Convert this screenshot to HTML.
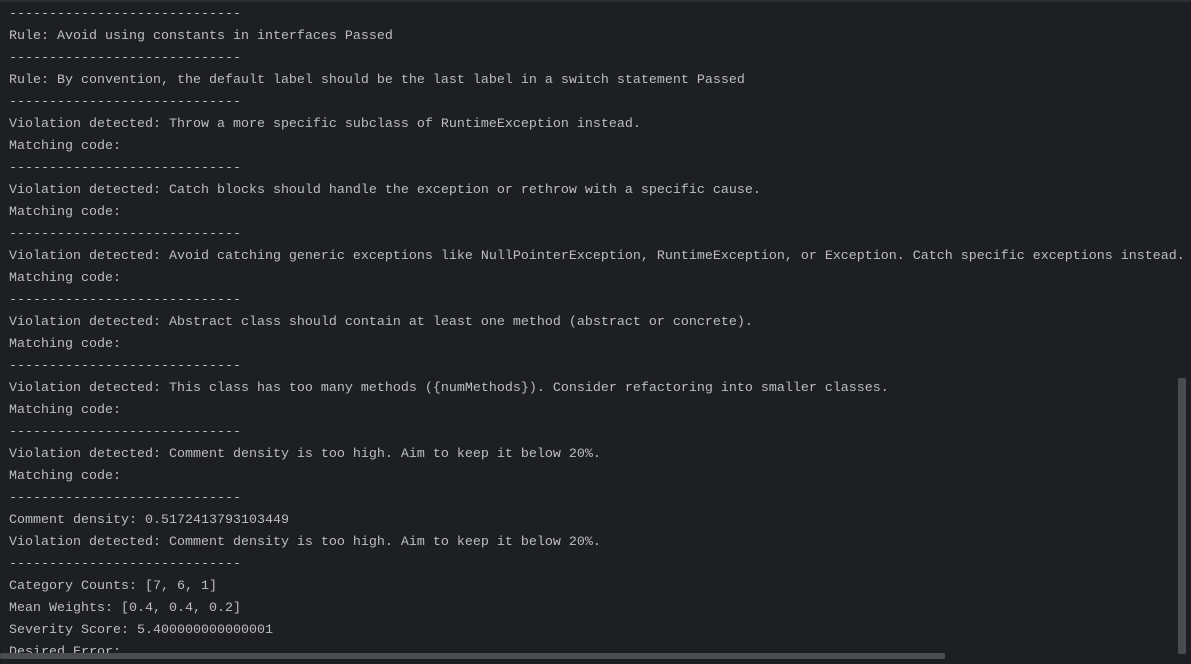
<!DOCTYPE html>
<html><head><style>
html,body{margin:0;padding:0;background:#1e1f22;width:1191px;height:659px;overflow:hidden}
.top{position:absolute;left:0;top:0;width:1191px;height:2px;background:#2b2d30}
pre{position:absolute;left:9px;top:4px;margin:0;font-family:"Liberation Mono",monospace;font-size:13.33px;line-height:22px;color:#bcbec4;white-space:pre}
.vs{position:absolute;left:1178px;top:378px;width:8px;height:276px;background:#4b4c4f;border-radius:2px}
.hs{position:absolute;left:0;top:653px;width:945px;height:6px;background:#4b4c4f;border-radius:2px}
</style></head><body>
<div class="top"></div>
<pre>-----------------------------
Rule: Avoid using constants in interfaces Passed
-----------------------------
Rule: By convention, the default label should be the last label in a switch statement Passed
-----------------------------
Violation detected: Throw a more specific subclass of RuntimeException instead.
Matching code:
-----------------------------
Violation detected: Catch blocks should handle the exception or rethrow with a specific cause.
Matching code:
-----------------------------
Violation detected: Avoid catching generic exceptions like NullPointerException, RuntimeException, or Exception. Catch specific exceptions instead.
Matching code:
-----------------------------
Violation detected: Abstract class should contain at least one method (abstract or concrete).
Matching code:
-----------------------------
Violation detected: This class has too many methods ({numMethods}). Consider refactoring into smaller classes.
Matching code:
-----------------------------
Violation detected: Comment density is too high. Aim to keep it below 20%.
Matching code:
-----------------------------
Comment density: 0.5172413793103449
Violation detected: Comment density is too high. Aim to keep it below 20%.
-----------------------------
Category Counts: [7, 6, 1]
Mean Weights: [0.4, 0.4, 0.2]
Severity Score: 5.400000000000001
Desired Error:</pre>
<div class="vs"></div>
<div class="hs"></div>
</body></html>
